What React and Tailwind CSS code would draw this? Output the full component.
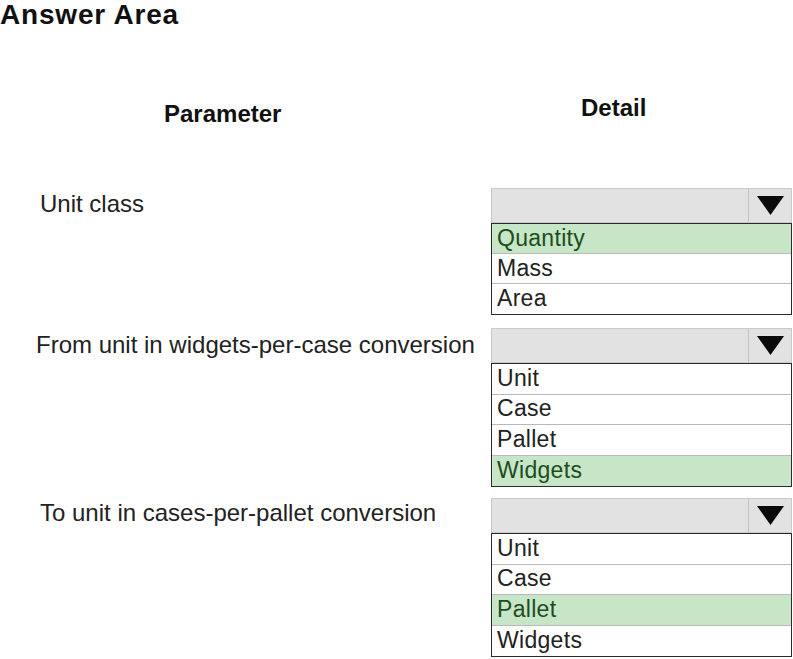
import React from 'react';

const font = { fontFamily: '"Liberation Sans", Arial, sans-serif' };

const rows = [
  {
    label: 'Unit class',
    labelClass: 'pl-[40px] pt-[4px]',
    options: ['Quantity', 'Mass', 'Area'],
    picked: 'Quantity',
    gap: 'mt-[61px]',
    rowH: 'h-[30px]',
  },
  {
    label: 'From unit in widgets-per-case conversion',
    labelClass: 'pl-[36px] pt-[5px]',
    options: ['Unit', 'Case', 'Pallet', 'Widgets'],
    picked: 'Widgets',
    gap: 'mt-[13px]',
    rowH: 'h-[30.5px]',
  },
  {
    label: 'To unit in cases-per-pallet conversion',
    labelClass: 'pl-[40px] pt-[3px]',
    options: ['Unit', 'Case', 'Pallet', 'Widgets'],
    picked: 'Pallet',
    gap: 'mt-[11px]',
    rowH: 'h-[30.5px]',
  },
];

const Dropdown = ({ options, picked, rowH }) => (
  <div className="w-[301px]">
    {/* Closed select box */}
    <div className="flex h-[35px] border border-[#c9c9c9] bg-[#e2e2e2]">
      <div className="flex-1" />
      <div className="flex w-[43px] items-center justify-center border-l border-[#c2c2c2]">
        <svg width="27" height="19" viewBox="0 0 27 19">
          <polygon points="0,0 27,0 13.5,19" fill="#0a0a0a" />
        </svg>
      </div>
    </div>
    {/* Option list */}
    <div className="border border-[#2b2b2b] divide-y divide-[#b9b9b9] bg-white">
      {options.map((opt) => (
        <div
          key={opt}
          className={
            'flex items-center pl-[5px] pb-[1px] text-[23px] leading-none tracking-[0.3px] ' +
            rowH +
            ' ' +
            (opt === picked ? 'bg-[#c7e5c7] text-[#1d4d1d]' : 'text-[#222]')
          }
        >
          {opt}
        </div>
      ))}
    </div>
  </div>
);

export default function App() {
  return (
    <div className="h-[659px] w-[793px] overflow-hidden bg-white text-[#1a1a1a]" style={font}>
      <h1 className="text-[28px] font-bold leading-[30px] tracking-[0.8px] text-[#111]">Answer Area</h1>

      {/* Column headings */}
      <div className="mt-[65px] flex items-start">
        <div className="w-[491px] pl-[164px] pt-[6px] text-[24px] font-bold leading-[26px] text-[#111]">
          Parameter
        </div>
        <div className="pl-[90px] text-[24px] font-bold leading-[26px] text-[#111]">Detail</div>
      </div>

      {rows.map((r) => (
        <div key={r.label} className={'flex items-start ' + r.gap}>
          <div className={'w-[491px] text-[24px] leading-none text-[#222] ' + r.labelClass}>{r.label}</div>
          <Dropdown options={r.options} picked={r.picked} rowH={r.rowH} />
        </div>
      ))}
    </div>
  );
}
